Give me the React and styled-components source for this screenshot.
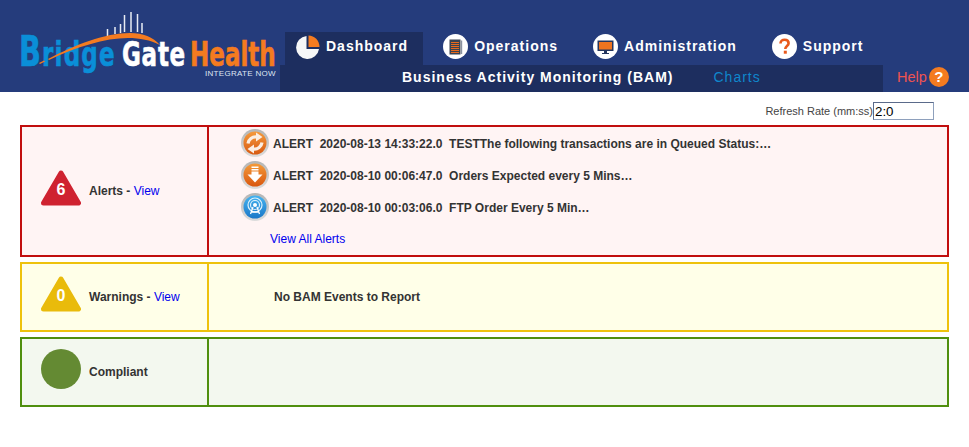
import styled, { createGlobalStyle } from "styled-components";

const tones = {
  red: { border: "#c10e0e", bg: "#fff4f4" },
  yellow: { border: "#eec20c", bg: "#ffffe8" },
  green: { border: "#4f8f0e", bg: "#f3f8ef" },
};

const GlobalStyle = createGlobalStyle`
  html, body {
    margin: 0;
    padding: 0;
    background: #fff;
    font-family: "Liberation Sans", Arial, sans-serif;
  }
`;

const Header = styled.header`
  display: flex;
  height: 92px;
  background: #253c7c;
`;

const LogoBox = styled.div`
  width: 280px;
  flex: none;
`;

const HeaderRight = styled.div`
  flex: 1;
  display: flex;
  flex-direction: column;
  justify-content: flex-end;
`;

const Nav = styled.nav`
  display: flex;
  gap: 9px;
  height: 33px;
  padding-left: 5px;
`;

const Tab = styled.a`
  display: flex;
  align-items: center;
  gap: 6px;
  padding: 0 15px 4px 11px;
  box-sizing: border-box;
  background: ${(p) => (p.$active ? "#1d2e5f" : "transparent")};
  color: #fff;
  font-size: 14px;
  font-weight: bold;
  letter-spacing: 1px;
  white-space: nowrap;
`;

const TabLabel = styled.span`
  padding-bottom: 2px;
`;

const SubRow = styled.div`
  display: flex;
  height: 27px;
`;

const SubBar = styled.div`
  width: 603px;
  display: flex;
  align-items: center;
  padding: 0 0 3px 122px;
  box-sizing: border-box;
  background: #1d2e5f;
  font-size: 14px;
  letter-spacing: 1px;
`;

const SubTitle = styled.span`
  color: #fff;
  font-weight: bold;
`;

const SubLink = styled.a`
  color: #0f86cc;
  margin-left: 40px;
`;

const Help = styled.a`
  display: flex;
  align-items: center;
  gap: 2px;
  margin-left: 14px;
  padding-bottom: 4px;
  color: #ef5350;
  font-size: 14.5px;
`;

const HelpDot = styled.span`
  width: 20px;
  height: 20px;
  border-radius: 50%;
  background: #f47b20;
  color: #fff;
  font-size: 15px;
  font-weight: bold;
  display: flex;
  align-items: center;
  justify-content: center;
`;

const RefreshRow = styled.div`
  display: flex;
  justify-content: flex-end;
  align-items: center;
  height: 33px;
  box-sizing: border-box;
  padding: 5px 35px 0 0;
  font-size: 11px;
  color: #444;
`;

const RateInput = styled.input`
  width: 61px;
  height: 18px;
  box-sizing: border-box;
  padding: 0 1px;
  border: 1px solid;
  border-color: #5a6a8a #8ea0bc #8ea0bc #5a6a8a;
  font: 13.33px "Liberation Sans", Arial, sans-serif;
  color: #000;
`;

const Panels = styled.main`
  display: flex;
  flex-direction: column;
  gap: 5px;
  margin: 0 20px;
`;

const Panel = styled.section`
  display: flex;
  height: ${(p) => p.$height}px;
  box-sizing: border-box;
  border: 2px solid ${(p) => tones[p.$tone].border};
  background: ${(p) => tones[p.$tone].bg};
  font-size: 12px;
  color: #333;
`;

const Summary = styled.div`
  width: 187px;
  flex: none;
  box-sizing: border-box;
  display: flex;
  align-items: center;
  gap: 8px;
  padding-left: 19px;
  border-right: 2px solid ${(p) => tones[p.$tone].border};
`;

const Badge = styled.div`
  position: relative;
  width: 40px;
  height: 36px;
  margin-bottom: 6px;
  flex: none;
`;

const BadgeCount = styled.span`
  position: absolute;
  left: 0;
  right: 0;
  top: 12px;
  text-align: center;
  color: #fff;
  font-size: 16px;
  font-weight: bold;
  line-height: 16px;
`;

const Dot = styled.div`
  width: 40px;
  height: 40px;
  margin-bottom: 6px;
  flex: none;
  border-radius: 50%;
  background: #648a33;
`;

const Label = styled.span`
  font-weight: bold;
  color: #333;
`;

const ViewLink = styled.a`
  color: #0000ee;
  font-weight: normal;
`;

const Body = styled.div`
  flex: 1;
  display: flex;
  flex-direction: column;
`;

const AlertList = styled.div`
  display: flex;
  flex-direction: column;
  padding-left: 32px;
`;

const AlertRow = styled.div`
  display: flex;
  align-items: center;
  gap: 4px;
  height: 32px;
  font-weight: bold;
  white-space: pre;
`;

const AlertText = styled.span`
  padding-top: 2px;
`;

const ViewAll = styled.a`
  color: #0000ee;
  margin: 9px 0 0 29px;
  line-height: 14px;
`;

const EmptyNote = styled.div`
  font-weight: bold;
  padding-left: 65px;
  margin: auto 0;
`;

const Logo = () => (
  <svg width="280" height="92" viewBox="0 0 280 92">
    <path
      d="M107.5 29V36M115 27V34M120.5 24V33M124.5 15V32M131 12V32M137.5 14V32M142 23V33"
      stroke="#e8ebf3"
      strokeWidth="1.5"
    />
    <g fontFamily="'DejaVu Sans', sans-serif" fontWeight="bold" fontSize="32" strokeWidth="0.6">
      <text transform="translate(19 66) scale(.72 1.05)" fill="#0a8fd8" stroke="#0a8fd8" letterSpacing="1.6">
        <tspan fontSize="40">B</tspan>ridge
      </text>
      <path
        d="M39 63L44 60.5L45 61.5L40 64ZM48 59C75 45 105 33 130 33C143 33 153 37 160 45C150 40 140 38 128 38C105 38 76 47 49 60Z"
        fill="#f47b20"
      />
      <text transform="translate(122 66) scale(.72 1.05)" fill="#fff" stroke="#fff" letterSpacing="1">Gate</text>
      <text transform="translate(190 66) scale(.72 1.05)" fill="#f47b20" stroke="#f47b20">Health</text>
    </g>
    <text
      x="205"
      y="76"
      fontFamily="'Liberation Sans', Arial, sans-serif"
      fontSize="8"
      fill="#dfe5f2"
      letterSpacing="0.3"
    >
      INTEGRATE NOW
    </text>
  </svg>
);

const PieIcon = () => (
  <svg width="24" height="24" viewBox="0 0 24 24">
    <path d="M10.5 1A11.5 11.5 0 1 0 23 14H10.5Z" fill="#f6f7f8" />
    <path d="M12.5 0.5C18.5 .5 23.5 5.5 23.5 12H12.5Z" fill="#f47b20" />
  </svg>
);

const DocIcon = () => (
  <svg width="25" height="25" viewBox="0 0 25 25">
    <circle cx="12.5" cy="12.5" r="12.5" fill="#fff" />
    <path d="M6.5 5.5H17.5V20.5H6.5Z" fill="#3a4250" />
    <path d="M18 6.5V20H19.2V6.5Z" fill="#8b92a0" />
    <path d="M8 8.5H16M8 10.5H16M8 12.5H16M8 14.5H16M8 16.5H16M8 18.5H16" stroke="#e8691c" strokeWidth="1.1" />
  </svg>
);

const MonitorIcon = () => (
  <svg width="25" height="25" viewBox="0 0 25 25">
    <circle cx="12.5" cy="12.5" r="12.5" fill="#fff" />
    <path d="M4.5 6.5H20.5V17H4.5Z" fill="#24365f" />
    <path d="M6 8H19V15.5H6Z" fill="#ee7420" />
    <path d="M11 17H14V19H16V20H9V19H11Z" fill="#24365f" />
  </svg>
);

const QuestionIcon = () => (
  <svg width="25" height="25" viewBox="0 0 25 25">
    <circle cx="12.5" cy="12.5" r="12.5" fill="#fff" />
    <path d="M8.5 9.5C8.5 7 10.3 5.8 12.6 5.8C15 5.8 16.6 7.2 16.6 9.2C16.6 12 13.3 12 13.3 15" fill="none" stroke="#e8591c" strokeWidth="2.6" />
    <rect x="11.8" y="16.7" width="3" height="3" fill="#e8591c" />
  </svg>
);

const Triangle = ({ color }) => (
  <svg width="40" height="36" viewBox="0 0 40 36">
    <path d="M20 3L37.5 33H2.5Z" fill={color} stroke={color} strokeWidth="5" strokeLinejoin="round" />
  </svg>
);

const GlossIcon = ({ id, from, to, children }) => (
  <svg width="28" height="28" viewBox="0 0 28 28">
    <defs>
      <linearGradient id={id} x1="0" y1="0" x2="0" y2="1">
        <stop offset="0" stopColor={from} />
        <stop offset="1" stopColor={to} />
      </linearGradient>
      <linearGradient id={`${id}-ring`} x1="0" y1="0" x2="0" y2="1">
        <stop offset="0" stopColor="#b4b4b4" />
        <stop offset="1" stopColor="#dcdcdc" />
      </linearGradient>
    </defs>
    <circle cx="14" cy="14" r="14" fill={`url(#${id}-ring)`} />
    <circle cx="14" cy="14" r="11.5" fill={`url(#${id})`} />
    {children}
  </svg>
);

const SyncArrow = ({ turn }) => (
  <g transform={`rotate(${turn} 14 14)`} fill="#fbeee3">
    <path d="M7 14.5A7.5 7.5 0 0 1 15.5 8" fill="none" stroke="#fbeee3" strokeWidth="3.2" />
    <path d="M15 3.5V12.5L21.5 8Z" />
  </g>
);

const SyncIcon = () => (
  <GlossIcon id="g1" from="#f59a3c" to="#d85a12">
    <SyncArrow turn={0} />
    <SyncArrow turn={180} />
  </GlossIcon>
);

const DownIcon = () => (
  <GlossIcon id="g2" from="#f49a3a" to="#d9570f">
    <path d="M10.5 5.5H17.5V7H10.5ZM10.5 8H17.5V9.5H10.5ZM10.5 10.5H17.5V13.5H21.5L14 21.5L6.5 13.5H10.5Z" fill="#fff" />
  </GlossIcon>
);

const RadioIcon = () => (
  <GlossIcon id="g3" from="#45b3f0" to="#1c78c8">
    <circle cx="14" cy="12" r="7" fill="none" stroke="#dff1fb" strokeWidth="1.2" />
    <circle cx="14" cy="12" r="4.5" fill="none" stroke="#dff1fb" strokeWidth="1.2" />
    <circle cx="14" cy="12" r="2" fill="#fff" />
    <path d="M12 14L9.5 21M16 14L18.5 21M10.5 19H17.5" stroke="#fff" strokeWidth="1.3" />
  </GlossIcon>
);

const navItems = [
  { label: "Dashboard", icon: <PieIcon />, active: true },
  { label: "Operations", icon: <DocIcon /> },
  { label: "Administration", icon: <MonitorIcon /> },
  { label: "Support", icon: <QuestionIcon /> },
];

const alerts = [
  { icon: <SyncIcon />, text: "ALERT  2020-08-13 14:33:22.0  TESTThe following transactions are in Queued Status:…" },
  { icon: <DownIcon />, text: "ALERT  2020-08-10 00:06:47.0  Orders Expected every 5 Mins…" },
  { icon: <RadioIcon />, text: "ALERT  2020-08-10 00:03:06.0  FTP Order Every 5 Min…" },
];

const App = () => {
  return (
    <>
      <GlobalStyle />
      <Header>
        <LogoBox>
          <Logo />
        </LogoBox>
        <HeaderRight>
          <Nav>
            {navItems.map((item) => (
              <Tab key={item.label} $active={item.active}>
                {item.icon}
                <TabLabel>{item.label}</TabLabel>
              </Tab>
            ))}
          </Nav>
          <SubRow>
            <SubBar>
              <SubTitle>Business Activity Monitoring (BAM)</SubTitle>
              <SubLink>Charts</SubLink>
            </SubBar>
            <Help>
              Help
              <HelpDot>?</HelpDot>
            </Help>
          </SubRow>
        </HeaderRight>
      </Header>

      <RefreshRow>
        Refresh Rate (mm:ss)
        <RateInput defaultValue="2:0" />
      </RefreshRow>

      <Panels>
        <Panel $tone="red" $height={132}>
          <Summary $tone="red">
            <Badge>
              <Triangle color="#cf2230" />
              <BadgeCount>6</BadgeCount>
            </Badge>
            <Label>
              Alerts - <ViewLink>View</ViewLink>
            </Label>
          </Summary>
          <Body>
            <AlertList>
              {alerts.map((alert) => (
                <AlertRow key={alert.text}>
                  {alert.icon}
                  <AlertText>{alert.text}</AlertText>
                </AlertRow>
              ))}
              <ViewAll>View All Alerts</ViewAll>
            </AlertList>
          </Body>
        </Panel>

        <Panel $tone="yellow" $height={70}>
          <Summary $tone="yellow">
            <Badge>
              <Triangle color="#e9bb0b" />
              <BadgeCount>0</BadgeCount>
            </Badge>
            <Label>
              Warnings - <ViewLink>View</ViewLink>
            </Label>
          </Summary>
          <Body>
            <EmptyNote>No BAM Events to Report</EmptyNote>
          </Body>
        </Panel>

        <Panel $tone="green" $height={70}>
          <Summary $tone="green">
            <Dot />
            <Label>Compliant</Label>
          </Summary>
          <Body />
        </Panel>
      </Panels>
    </>
  );
};

export default App;
